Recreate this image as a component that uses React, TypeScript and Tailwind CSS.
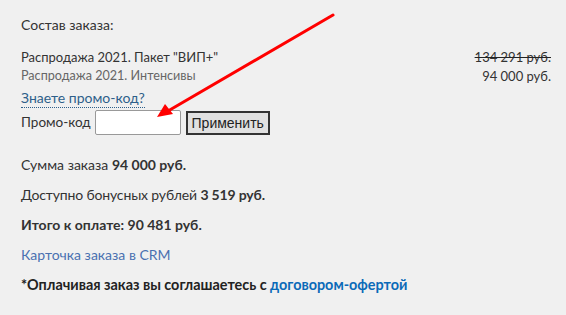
export default function App() {
  return (
    <main className="relative w-[566px] h-[315px] bg-[#f0f0f0] text-[#333] overflow-hidden font-['Lato',sans-serif] text-[14px]">
      <div className="pl-[21px] pr-[15px] pt-[16px]">
        <p className="leading-[18px]">Состав заказа:</p>

        {/* Order items */}
        <div className="mt-[14px] flex justify-between text-[13px]">
          <div>
            <p className="leading-[18px]">Распродажа 2021. Пакет "ВИП+"</p>
            <p className="text-[12.6px] text-[#666] leading-[20px]">Распродажа 2021. Интенсивы</p>
          </div>
          <div className="text-right">
            <p className="leading-[18px] line-through decoration-[#222]">134 291 руб.</p>
            <p className="leading-[20px]">94 000 руб.</p>
          </div>
        </div>

        {/* Promo */}
        <a className="mt-[3px] inline-block text-[#2e5f8a] leading-[18px] border-b border-dotted border-[#2e5f8a]">
          Знаете промо-код?
        </a>
        <div className="mt-[2px] flex items-center">
          <span className="text-[13.5px]">Промо-код</span>
          <input className="ml-[4px] w-[86px] h-[25px] bg-white border border-[#999] rounded-[2px]" />
          <button className="ml-[5px] h-[24px] w-[84px] bg-[#e1e1e1] border-2 border-[#333] font-['Liberation_Sans',sans-serif] text-[14px] text-[#222]">
            Применить
          </button>
        </div>

        {/* Totals */}
        <div className="mt-[21px] flex flex-col gap-[12px] leading-[18px]">
          <p>
            Сумма заказа <b>94 000 руб.</b>
          </p>
          <p className="tracking-[-0.15px]">
            Доступно бонусных рублей <b>3 519 руб.</b>
          </p>
          <p className="font-bold">Итого к оплате: 90 481 руб.</p>
          <a className="text-[#4a70b0]">Карточка заказа в CRM</a>
          <p className="font-bold text-[14.4px] text-[#222]">
            *Оплачивая заказ вы соглашаетесь с <a className="text-[#0a6ab8]">договором-офертой</a>
          </p>
        </div>
      </div>

      {/* Annotation arrow */}
      <svg className="absolute left-0 top-0" width="566" height="315">
        <line x1="333" y1="15" x2="168" y2="111" stroke="#f00" strokeWidth="3" strokeLinecap="round" />
        <polygon points="157,117 165,104 173,114" fill="#f00" />
      </svg>
    </main>
  );
}
